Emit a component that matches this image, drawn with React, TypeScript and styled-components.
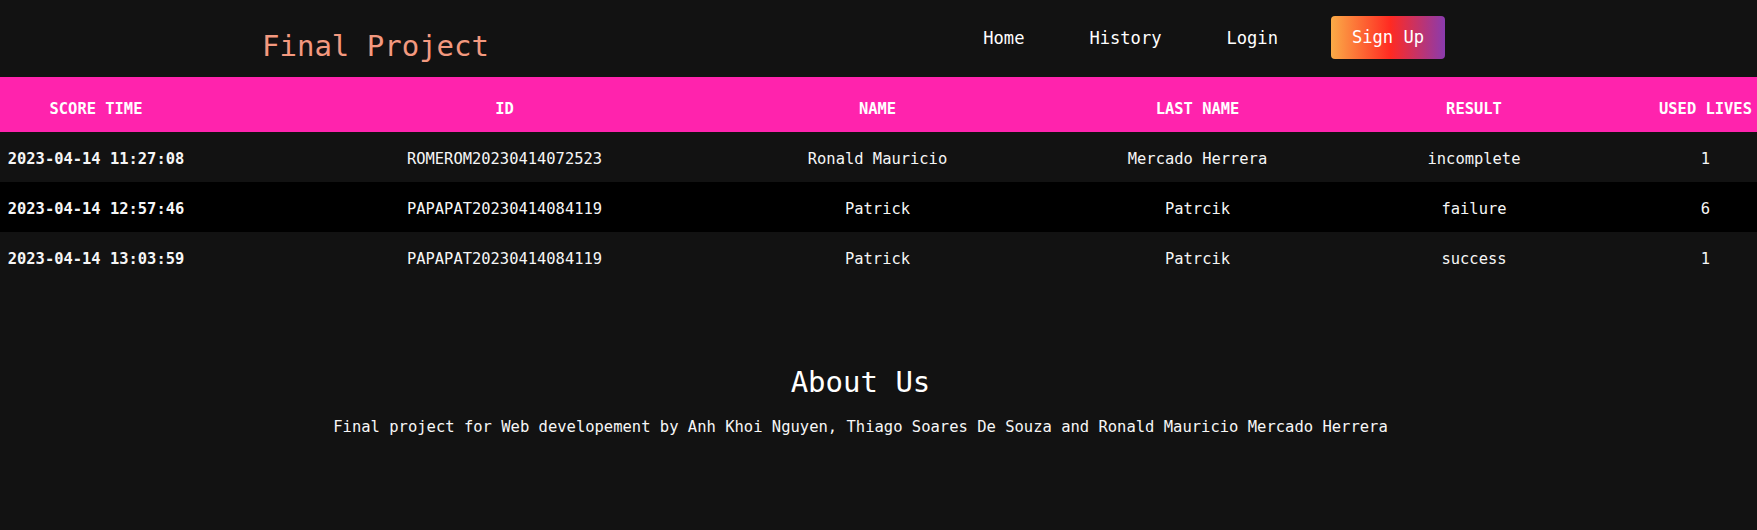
import React from 'react';
import styled, { createGlobalStyle } from 'styled-components';

const GlobalStyle = createGlobalStyle`
  html, body {
    margin: 0;
    padding: 0;
    background: #121212;
  }
  body {
    font-family: "DejaVu Sans Mono", "Liberation Mono", monospace;
    color: #ffffff;
  }
  * { box-sizing: border-box; }
`;

type Score = {
  time: string;
  id: string;
  name: string;
  last: string;
  result: string;
  lives: number;
};

type Column = { key: keyof Score; label: string; width: string; inset?: number; bold?: boolean };

const COLUMNS: Column[] = [
  { key: 'time', label: 'SCORE TIME', width: '355px', inset: 163, bold: true },
  { key: 'id', label: 'ID', width: '299px' },
  { key: 'name', label: 'NAME', width: '447px' },
  { key: 'last', label: 'LAST NAME', width: '193px' },
  { key: 'result', label: 'RESULT', width: '360px' },
  { key: 'lives', label: 'USED LIVES', width: '1fr' },
];

const TRACKS = COLUMNS.map((c) => c.width).join(' ');

const SCORES: Score[] = [
  { time: '2023-04-14 11:27:08', id: 'ROMEROM20230414072523', name: 'Ronald Mauricio', last: 'Mercado Herrera', result: 'incomplete', lives: 1 },
  { time: '2023-04-14 12:57:46', id: 'PAPAPAT20230414084119', name: 'Patrick', last: 'Patrcik', result: 'failure', lives: 6 },
  { time: '2023-04-14 13:03:59', id: 'PAPAPAT20230414084119', name: 'Patrick', last: 'Patrcik', result: 'success', lives: 1 },
];

const Page = styled.div`
  min-height: 530px;
  background: #121212;
`;

const TopBar = styled.header`
  display: flex;
  align-items: center;
  justify-content: space-between;
  height: 77px;
  padding: 0 312px 0 262px;
`;

const Brand = styled.h1`
  margin: 16px 0 0;
  font-size: 29px;
  line-height: 1;
  font-weight: 400;
  color: #f3997f;
`;

const Nav = styled.nav`
  display: flex;
  align-items: center;
  margin-top: -2px;
`;

const Links = styled.ul`
  display: flex;
  align-items: center;
  gap: 65px;
  list-style: none;
  margin: 0;
  padding: 2px 0 0;
`;

const NavLink = styled.a`
  display: block;
  font-size: 17.1px;
  line-height: 1;
  color: #ffffff;
  text-decoration: none;
`;

const SignUp = styled.a`
  display: flex;
  align-items: center;
  margin-left: 53px;
  height: 43px;
  padding: 1px 21px 0;
  border-radius: 4px;
  background: linear-gradient(90deg, #fbab47 0%, #ff2a22 52%, #8a3bae 100%);
  color: #ffffff;
  font-size: 17.1px;
  line-height: 1;
  text-decoration: none;
`;

const Table = styled.div`
  width: 100%;
`;

const HeadRow = styled.div`
  display: grid;
  grid-template-columns: ${TRACKS};
  align-items: center;
  height: 55px;
  padding-top: 11px;
  background: #ff23ad;
`;

const HeadCell = styled.div<{ $inset?: number }>`
  padding-right: ${(p) => p.$inset ?? 0}px;
  text-align: center;
  white-space: nowrap;
  font-size: 15.45px;
  line-height: 1;
  font-weight: 700;
  color: #ffffff;
`;

const BodyRow = styled.div<{ $dark: boolean }>`
  display: grid;
  grid-template-columns: ${TRACKS};
  align-items: center;
  height: 50px;
  padding-top: 6px;
  background: ${(p) => (p.$dark ? '#000000' : '#121212')};
`;

const Cell = styled.div<{ $inset?: number; $bold?: boolean }>`
  padding-right: ${(p) => p.$inset ?? 0}px;
  text-align: center;
  white-space: nowrap;
  font-size: 15.45px;
  line-height: 1;
  font-weight: ${(p) => (p.$bold ? 700 : 400)};
  color: #f6f6f6;
`;

const About = styled.section`
  margin-top: 86px;
  padding-right: 36px;
  text-align: center;
`;

const AboutTitle = styled.h2`
  margin: 0;
  font-size: 29px;
  line-height: 1;
  font-weight: 400;
  color: #ffffff;
`;

const AboutText = styled.p`
  margin: 23px 0 0;
  font-size: 15.5px;
  line-height: 1;
  color: #f6f6f6;
`;

export default function App() {
  return (
    <Page>
      <GlobalStyle />
      <TopBar>
        <Brand>Final Project</Brand>
        <Nav>
          <Links>
            <li><NavLink href="#">Home</NavLink></li>
            <li><NavLink href="#">History</NavLink></li>
            <li><NavLink href="#">Login</NavLink></li>
          </Links>
          <SignUp href="#">Sign Up</SignUp>
        </Nav>
      </TopBar>
      <Table>
        <HeadRow>
          {COLUMNS.map((c) => (
            <HeadCell key={c.key} $inset={c.inset}>{c.label}</HeadCell>
          ))}
        </HeadRow>
        {SCORES.map((s, i) => (
          <BodyRow key={s.time} $dark={i % 2 === 1}>
            {COLUMNS.map((c) => (
              <Cell key={c.key} $inset={c.inset} $bold={c.bold}>{String(s[c.key])}</Cell>
            ))}
          </BodyRow>
        ))}
      </Table>
      <About>
        <AboutTitle>About Us</AboutTitle>
        <AboutText>
          Final project for Web developement by Anh Khoi Nguyen, Thiago Soares De Souza and Ronald Mauricio Mercado Herrera
        </AboutText>
      </About>
    </Page>
  );
}
